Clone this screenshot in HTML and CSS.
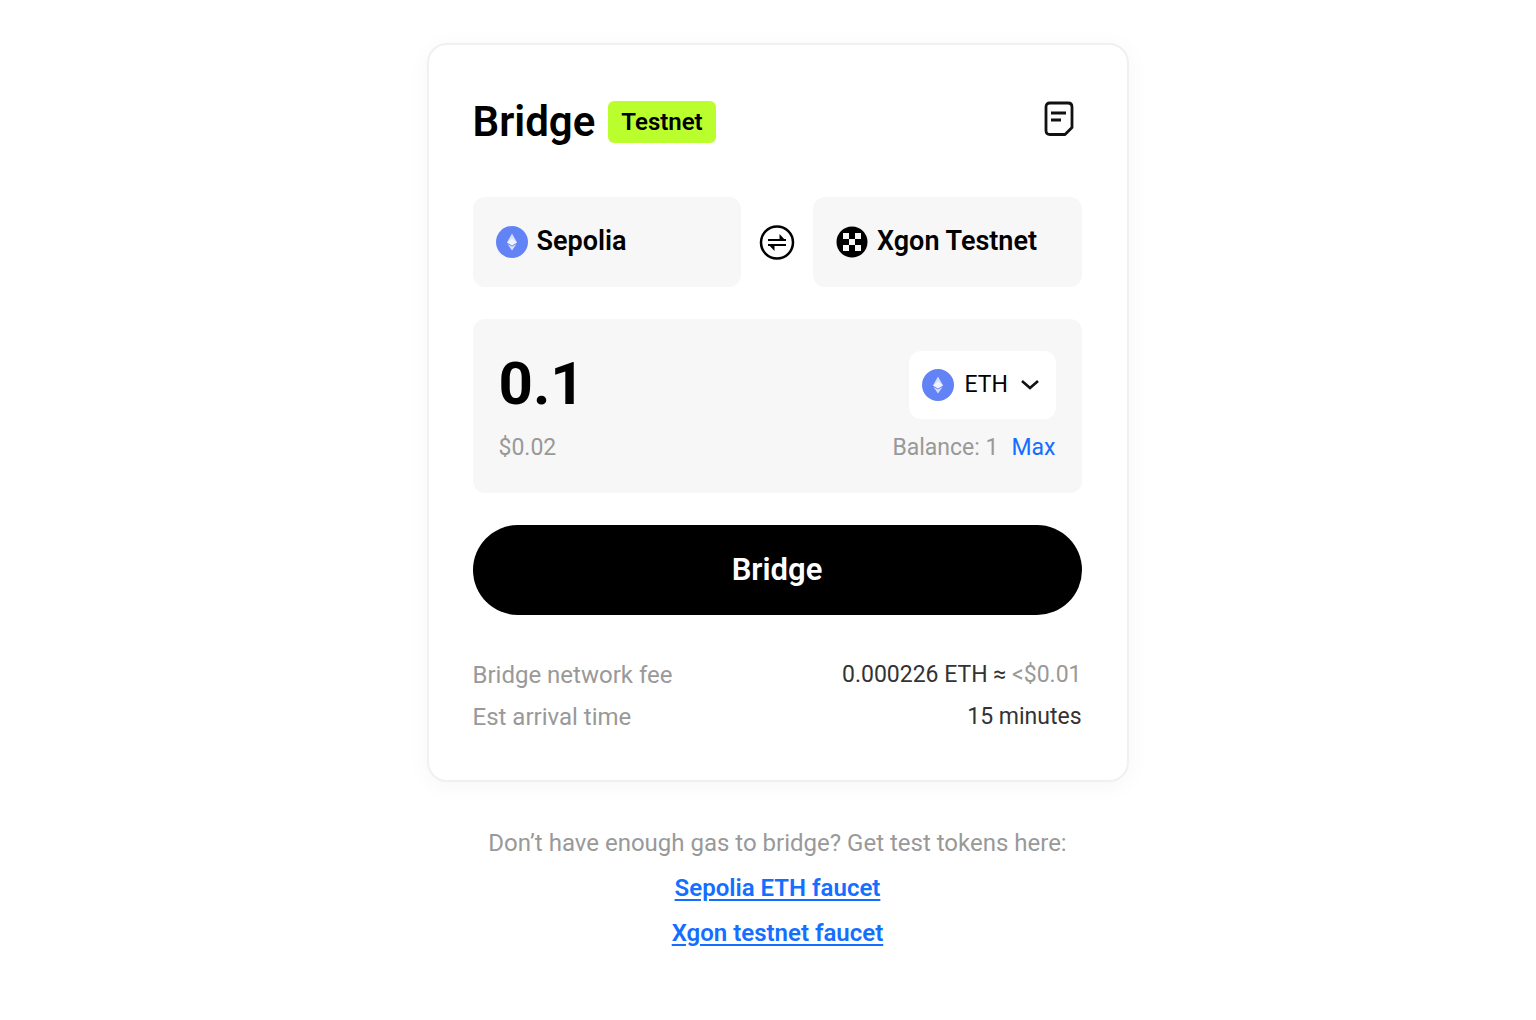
FILE: index.html
```html
<!DOCTYPE html>
<html lang="en">
<head>
<meta charset="utf-8">
<meta name="viewport" content="width=device-width, initial-scale=1">
<title>Bridge</title>
<link rel="stylesheet" href="styles.css">
</head>
<body>
<svg class="sprite" aria-hidden="true">
  <symbol id="eth" viewBox="0 0 32 32">
    <circle cx="16" cy="16" r="16" fill="#6283f5"/>
    <path d="M16 7.500 11 16.500 16 19.500 21 16.500Z" fill="#fff" fill-opacity=".75"/>
    <path d="M16 12.500 11 16.500 16 19.500 21 16.500Z" fill="#fff" fill-opacity=".6"/>
    <path d="M11.500 18 16 24.500 20.500 18 16 20.500Z" fill="#fff" fill-opacity=".75"/>
  </symbol>
</svg>
<main class="page">
  <form class="card">
    <header class="header">
      <h1 class="title">Bridge</h1>
      <span class="badge">Testnet</span>
      <button class="icon-button history" type="button" aria-label="History">
        <svg width="30" height="36" viewBox="0 0 30 36" fill="none" stroke="#111" stroke-width="2.800">
          <path d="M6 2H24Q28 2 28 6V26.500L21 33.500H6Q2 33.500 2 29.500V6Q2 2 6 2Z" stroke-linejoin="round"/>
          <path d="M7 12H22M7 19H17"/>
        </svg>
      </button>
    </header>
    <div class="networks">
      <button class="network" type="button"><svg class="coin"><use href="#eth"/></svg><span class="network-name">Sepolia</span></button>
      <button class="icon-button swap" type="button" aria-label="Swap networks">
        <svg width="36" height="36" viewBox="0 0 36 36" fill="none" stroke="#000">
          <circle cx="18" cy="18.500" r="16" stroke-width="2.500"/>
          <path d="M9 16H27M9 21H27" stroke-width="2.200"/>
          <path d="M20.500 10 27 17H20.500ZM15.500 27 9 20H15.500Z" fill="#000" stroke="none"/>
        </svg>
      </button>
      <button class="network" type="button">
        <svg class="coin" viewBox="0 0 32 32">
          <circle cx="16" cy="16" r="15.500" fill="#000"/>
          <path d="M7 7h6v6H7zM19 7h6v6h-6zM13 13h6v6h-6zM7 19h6v6H7zM19 19h6v6h-6z" fill="#f7f7f7"/>
        </svg><span class="network-name">Xgon Testnet</span></button>
    </div>
    <section class="panel">
      <div class="panel-row">
        <input class="amount" type="text" inputmode="decimal" value="0.1" aria-label="Amount">
        <div class="token">
          <svg class="coin"><use href="#eth"/></svg>
          <select class="token-select" aria-label="Token"><option>ETH</option></select>
          <svg class="chevron" width="20" height="12" viewBox="0 0 20 12" fill="none" stroke="#111" stroke-width="2.600"><path d="M2 2 10 9 18 2"/></svg>
        </div>
      </div>
      <div class="panel-row muted">
        <span>$0.02</span>
        <span class="balance">Balance: 1 <button class="max" type="button">Max</button></span>
      </div>
    </section>
    <button class="submit" type="button">Bridge</button>
    <dl class="details">
      <div class="detail"><dt>Bridge network fee</dt><dd>0.000226 ETH ≈ <span class="muted">&lt;$0.01</span></dd></div>
      <div class="detail"><dt>Est arrival time</dt><dd>15 minutes</dd></div>
    </dl>
  </form>
  <footer class="help">
    <p>Don’t have enough gas to bridge? Get test tokens here:</p>
    <a href="#">Sepolia ETH faucet</a>
    <a href="#">Xgon testnet faucet</a>
  </footer>
</main>
</body>
</html>
```
FILE: styles.css
```css
* { box-sizing: border-box; }
body {
  margin: 0;
  background: #fff;
  color: #000;
  font: 400 24px/42px Roboto, "Noto Sans", sans-serif;
}
button, input, select { font: inherit; color: inherit; border: 0; padding: 0; background: none; }
button { cursor: pointer; }
svg { display: block; flex: none; }
h1, p, dl, dd { margin: 0; }
.sprite { display: none; }
.page {
  display: flex;
  flex-direction: column;
  align-items: center;
  gap: 39px;
  padding: 43px 0 65px 19px;
}
.card {
  width: 100%;
  max-width: 702px;
  padding: 56px 45px 42px 44px;
  border: 2px solid #f0f0f0;
  border-radius: 20px;
  background: #fff;
  box-shadow: 0 4px 24px rgba(0, 0, 0, .04);
  display: flex;
  flex-direction: column;
  gap: 32px;
}
.header { display: flex; align-items: center; gap: 13px; margin-bottom: 22px; }
.title { font-size: 42px; line-height: 42px; font-weight: 600; }
.badge {
  padding: 0 13px;
  border-radius: 6px;
  background: #baff2d;
  font-weight: 600;
}
.history { margin: 0 8px 6px auto; }
.networks { display: grid; grid-template-columns: 1fr 36px 1fr; gap: 18px; align-items: center; }
.network {
  height: 90px;
  padding: 0 23px;
  border-radius: 12px;
  background: #f7f7f7;
  display: flex;
  align-items: center;
  gap: 9px;
  font-size: 27px;
  font-weight: 600;
  white-space: nowrap;
}
.network-name { padding-bottom: 2px; }
.coin { width: 32px; height: 32px; }
.panel { padding: 32px 26px 24px; border-radius: 12px; background: #f7f7f7; font-size: 23px; }
.panel-row { display: flex; justify-content: space-between; align-items: center; }
.panel-row + .panel-row { margin-top: 8px; }
.amount { width: 50%; min-width: 0; height: 68px; padding-bottom: 4px; font-size: 60px; font-weight: 700; outline: 0; }
.token {
  height: 68px;
  padding: 0 16px 0 13px;
  border-radius: 12px;
  background: #fff;
  display: flex;
  align-items: center;
  gap: 11px;
}
.token-select { appearance: none; outline: 0; }
.muted, .detail dt, .help { color: #999; }
.balance { display: flex; gap: 13px; }
.max { color: #146eff; }
.submit {
  height: 90px;
  border-radius: 45px;
  background: #000;
  color: #fff;
  font-size: 31px;
  font-weight: 600;
}
.details { margin-top: 7px; }
.detail { display: flex; justify-content: space-between; }
.detail dd { color: #333; font-size: 23px; }
.help { display: flex; flex-direction: column; align-items: center; line-height: 45px; text-align: center; }
.help a { color: #146eff; font-weight: 600; text-underline-offset: 3px; }
```
